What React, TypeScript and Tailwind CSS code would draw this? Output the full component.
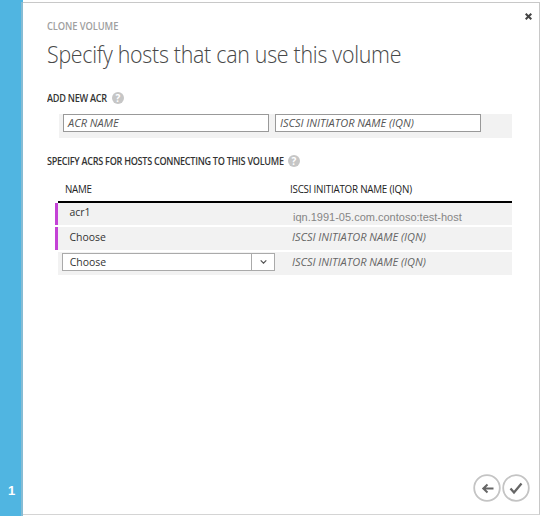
import React from "react";

function HelpIcon() {
  return (
    <span className="flex h-[12px] w-[12px] items-center justify-center rounded-full bg-[#c6c6c6] text-[10px] leading-[12px] font-bold text-white">
      ?
    </span>
  );
}

function Field({ label }: { label: string }) {
  return (
    <div className="flex h-[18px] w-[206px] items-center border border-[#999] bg-white pl-1">
      <span className="text-[11px] leading-[16px] whitespace-nowrap italic text-[#555]">{label}</span>
    </div>
  );
}

function Row({
  selected,
  height = "h-[23px]",
  name,
  children,
}: {
  selected?: boolean;
  height?: string;
  name: React.ReactNode;
  children: React.ReactNode;
}) {
  return (
    <div className={`flex ${height}`}>
      <div className={`w-[3px] ${selected ? "bg-[#c442d6]" : ""}`} />
      <div className="flex flex-1 bg-[#f2f2f2]">
        <div className="w-[234px]">{name}</div>
        <div>{children}</div>
      </div>
    </div>
  );
}

function RowName({ text, height = "leading-[20px]" }: { text: string; height?: string }) {
  return (
    <div className={`origin-left scale-x-[0.95] pl-[12px] text-[11px] text-[#333] ${height}`}>{text}</div>
  );
}

function RowHint() {
  return (
    <div className="text-[11px] leading-[19px] whitespace-nowrap italic text-[#666]">ISCSI INITIATOR NAME (IQN)</div>
  );
}

export default function App() {
  return (
    <div className="flex h-[516px] w-[542px] overflow-hidden bg-white font-['Open_Sans','Noto_Sans',sans-serif]">
      <aside className="flex w-[21px] shrink-0 items-end justify-center bg-[#50b5e1] pb-[16px] pl-[2px]">
        <span className="font-['Liberation_Sans',sans-serif] text-[13px] leading-[18px] font-bold text-white">1</span>
      </aside>
      <div className="flex w-[2px] shrink-0 flex-col">
        <div className="h-[2px] bg-[#50b5e1]" />
        <div className="flex-1 bg-[#86bcd4]" />
      </div>
      <main className="mt-[2px] flex h-[513px] w-[517px] flex-col border border-l-0 border-[#c8c8c8] border-b-[#d4d4d4]">
        <header className="flex h-[50px] justify-between pl-[24px]">
          <div className="origin-left scale-x-[0.935] pt-[16px] text-[10px] leading-[14px] font-semibold tracking-[-0.1px] text-[#a0a0a0]">
            CLONE VOLUME
          </div>
          <svg className="mt-[10px] mr-[7px] h-[7px] w-[7px]" viewBox="0 0 7 7" fill="none" stroke="#444" strokeWidth="2">
            <path d="M.7.7l5.6 5.6M6.3.7L.7 6.3" />
          </svg>
        </header>
        <h1 className="-mt-[16px] ml-[24px] h-[34px] origin-left scale-x-[0.93] text-[23px] leading-[34px] font-light tracking-[-0.3px] whitespace-nowrap text-[#484848]">
          Specify hosts that can use this volume
        </h1>
        <div className="mt-[20px] flex h-[14px] items-center pl-[24px]">
          <span className="w-[65px] origin-left scale-x-[0.915] text-[10px] leading-[14px] font-semibold tracking-[-0.3px] whitespace-nowrap text-[#333]">
            ADD NEW ACR
          </span>
          <HelpIcon />
        </div>
        <section className="mt-[9px] ml-[36px] flex h-[24px] w-[453px] gap-[6px] bg-[#f2f2f2] pl-[4px]">
          <Field label="ACR NAME" />
          <Field label="ISCSI INITIATOR NAME (IQN)" />
        </section>
        <div className="mt-[16px] flex h-[14px] items-center pl-[24px]">
          <span className="w-[241px] origin-left scale-x-[0.908] text-[10px] leading-[14px] font-semibold tracking-[-0.3px] whitespace-nowrap text-[#333]">
            SPECIFY ACRS FOR HOSTS CONNECTING TO THIS VOLUME
          </span>
          <HelpIcon />
        </div>
        <section className="mt-[12px] ml-[32px] w-[457px]">
          <div className="ml-[3px] flex h-[23px] border-b-2 border-black pl-[7px] text-[10.5px] leading-[18px] tracking-[-0.25px] whitespace-nowrap text-[#222]">
            <span className="w-[225px] origin-left scale-x-[0.93]">NAME</span>
            <span className="origin-left scale-x-[0.935]">ISCSI INITIATOR NAME (IQN)</span>
          </div>
          <div className="flex flex-col gap-[2px]">
            <Row selected height="h-[22px]" name={<RowName text="acr1" height="leading-[18px]" />}>
              <div className="pt-[5px] pl-px font-['Liberation_Sans',sans-serif] text-[11px] leading-[18px] text-[#858585]">
                iqn.1991-05.com.contoso:test-host
              </div>
            </Row>
            <Row selected name={<RowName text="Choose" />}>
              <RowHint />
            </Row>
            <Row
              name={
                <div className="mt-px ml-[4px] flex h-[18px] w-[213px] border border-[#aaa] bg-white">
                  <span className="w-[188px] origin-left scale-x-[0.95] pl-[7px] text-[11px] leading-[16px] text-[#333]">
                    Choose
                  </span>
                  <span className="flex w-[23px] items-center justify-center border-l border-[#aaa]">
                    <svg className="h-[4px] w-[7px]" viewBox="0 0 7 4" fill="none" stroke="#555" strokeWidth="1.2">
                      <path d="M.7.4l2.8 2.8L6.3.4" />
                    </svg>
                  </span>
                </div>
              }
            >
              <RowHint />
            </Row>
          </div>
        </section>
        <footer className="mt-auto mr-[9px] mb-[12px] flex justify-end gap-[1px]">
          <svg className="h-[28px] w-[28px]" viewBox="0 0 28 28" fill="none">
            <circle cx="14" cy="14" r="12.8" stroke="#c4c4c4" strokeWidth="1.8" />
            <path d="M20.5 14.5H10M14.5 10.5l-4.2 4 4.2 4" stroke="#666" strokeWidth="2" />
          </svg>
          <svg className="h-[28px] w-[28px]" viewBox="0 0 28 28" fill="none">
            <circle cx="14" cy="14" r="12.8" stroke="#c4c4c4" strokeWidth="1.8" />
            <path d="M8.5 14.5l3.5 4 7.5-9" stroke="#666" strokeWidth="2.3" />
          </svg>
        </footer>
      </main>
    </div>
  );
}
